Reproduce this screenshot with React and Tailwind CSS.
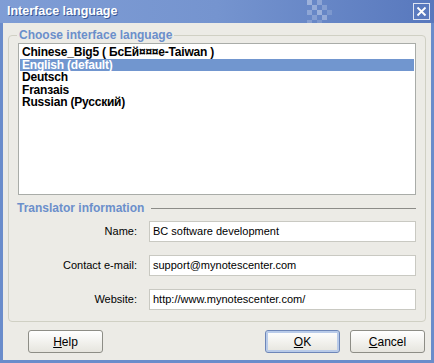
import React from 'react';

const languages = [
  'Chinese_Big5 ( БсЕй¤¤¤е-Taiwan )',
  'English (default)',
  'Deutsch',
  'Franзais',
  'Russian (Русский)',
];

const fields = [
  ['Name:', 'BC software development'],
  ['Contact e-mail:', 'support@mynotescenter.com'],
  ['Website:', 'http://www.mynotescenter.com/'],
];

function Checker() {
  const cells = [
    [0, 0, 0.35], [2, 0, 0.25], [1, 1, 0.3], [3, 1, 0.2], [0, 2, 0.25],
    [2, 2, 0.35], [1, 3, 0.2], [3, 3, 0.3], [4, 2, 0.15], [0, 4, 0.2], [2, 4, 0.15],
  ];
  return (
    <svg width="30" height="23" className="absolute left-[305px] top-0">
      {cells.map(([x, y, o], i) => (
        <rect key={i} x={x * 5 + 2} y={y * 5} width="5" height="5" fill="#ffffff" opacity={o} />
      ))}
    </svg>
  );
}

function Button({ children, primary }) {
  return (
    <button
      className={
        'w-[75px] h-[23px] rounded-[3px] border text-[12px] text-black bg-gradient-to-b from-white to-[#e6e5de] ' +
        (primary ? 'border-[#6d86b8] shadow-[inset_0_0_0_2px_#b9cbe9]' : 'border-[#8d8d86]')
      }
    >
      {children}
    </button>
  );
}

export default function App() {
  return (
    <div
      className="w-[434px] h-[363px] flex flex-col bg-[#6a8ccb]"
      style={{ fontFamily: '"Liberation Sans", Arial, sans-serif' }}
    >
      {/* title bar */}
      <div className="relative h-[23px] flex items-center justify-between pl-[7px] pr-[4px] bg-gradient-to-r from-[#7f9dd5] via-[#7594cf] to-[#5878bd]">
        <Checker />
        <span className="relative text-white font-bold text-[12.5px] [text-shadow:1px_1px_0_#3a5a98]">
          Interface language
        </span>
        <div className="relative w-[17px] h-[17px] border border-white/80 flex items-center justify-center">
          <svg width="11" height="11" viewBox="0 0 11 11">
            <path d="M1.5 1.5 L9.5 9.5 M9.5 1.5 L1.5 9.5" stroke="#fff" strokeWidth="1.8" />
          </svg>
        </div>
      </div>

      {/* body */}
      <div className="flex-1 mx-[3px] mb-[3px] bg-[#ecebe6] flex flex-col">
        <div className="relative mt-[12px] mx-[5px] h-[287px] border border-[#d0d0c4] rounded-[4px] px-[9px] pt-[7px]">
          <span className="absolute left-[8px] top-[-9px] px-[2px] bg-[#ecebe6] text-[12px] font-bold text-[#6b8fcb] leading-[16px]">
            Choose interface language
          </span>
          <div className="h-[152px] border border-[#a9aca8] bg-white pt-[2px] px-px">
            {languages.map((l, i) => (
              <div
                key={l}
                className={
                  'h-[12.5px] leading-[12.5px] pl-[2px] text-[12px] font-bold tracking-[-0.2px] ' +
                  (i === 1 ? 'bg-[#7196cf] text-white' : 'text-black')
                }
              >
                {l}
              </div>
            ))}
          </div>

          <div className="flex items-center mt-[4px] -ml-[1px]">
            <span className="text-[12px] font-bold text-[#6b8fcb]">Translator information</span>
            <div className="flex-1 ml-[7px] h-px bg-[#8c8c88]" />
          </div>

          <div className="mt-[4px] flex flex-col gap-[13px]">
            {fields.map(([label, value]) => (
              <div key={label} className="flex items-center">
                <span className="w-[119px] text-right text-[11px] text-black">{label}</span>
                <div className="ml-[12px] flex-1 h-[21px] border border-[#c9c9c2] bg-white flex items-center px-[3px] text-[11px] text-black">
                  {value}
                </div>
              </div>
            ))}
          </div>
        </div>

        <div className="flex items-center mt-[8px] pl-[25px] pr-[6px]">
          <Button>
            <u>H</u>elp
          </Button>
          <div className="flex-1" />
          <Button primary>
            <u>O</u>K
          </Button>
          <div className="w-[10px]" />
          <Button>
            <u>C</u>ancel
          </Button>
        </div>
      </div>
    </div>
  );
}
